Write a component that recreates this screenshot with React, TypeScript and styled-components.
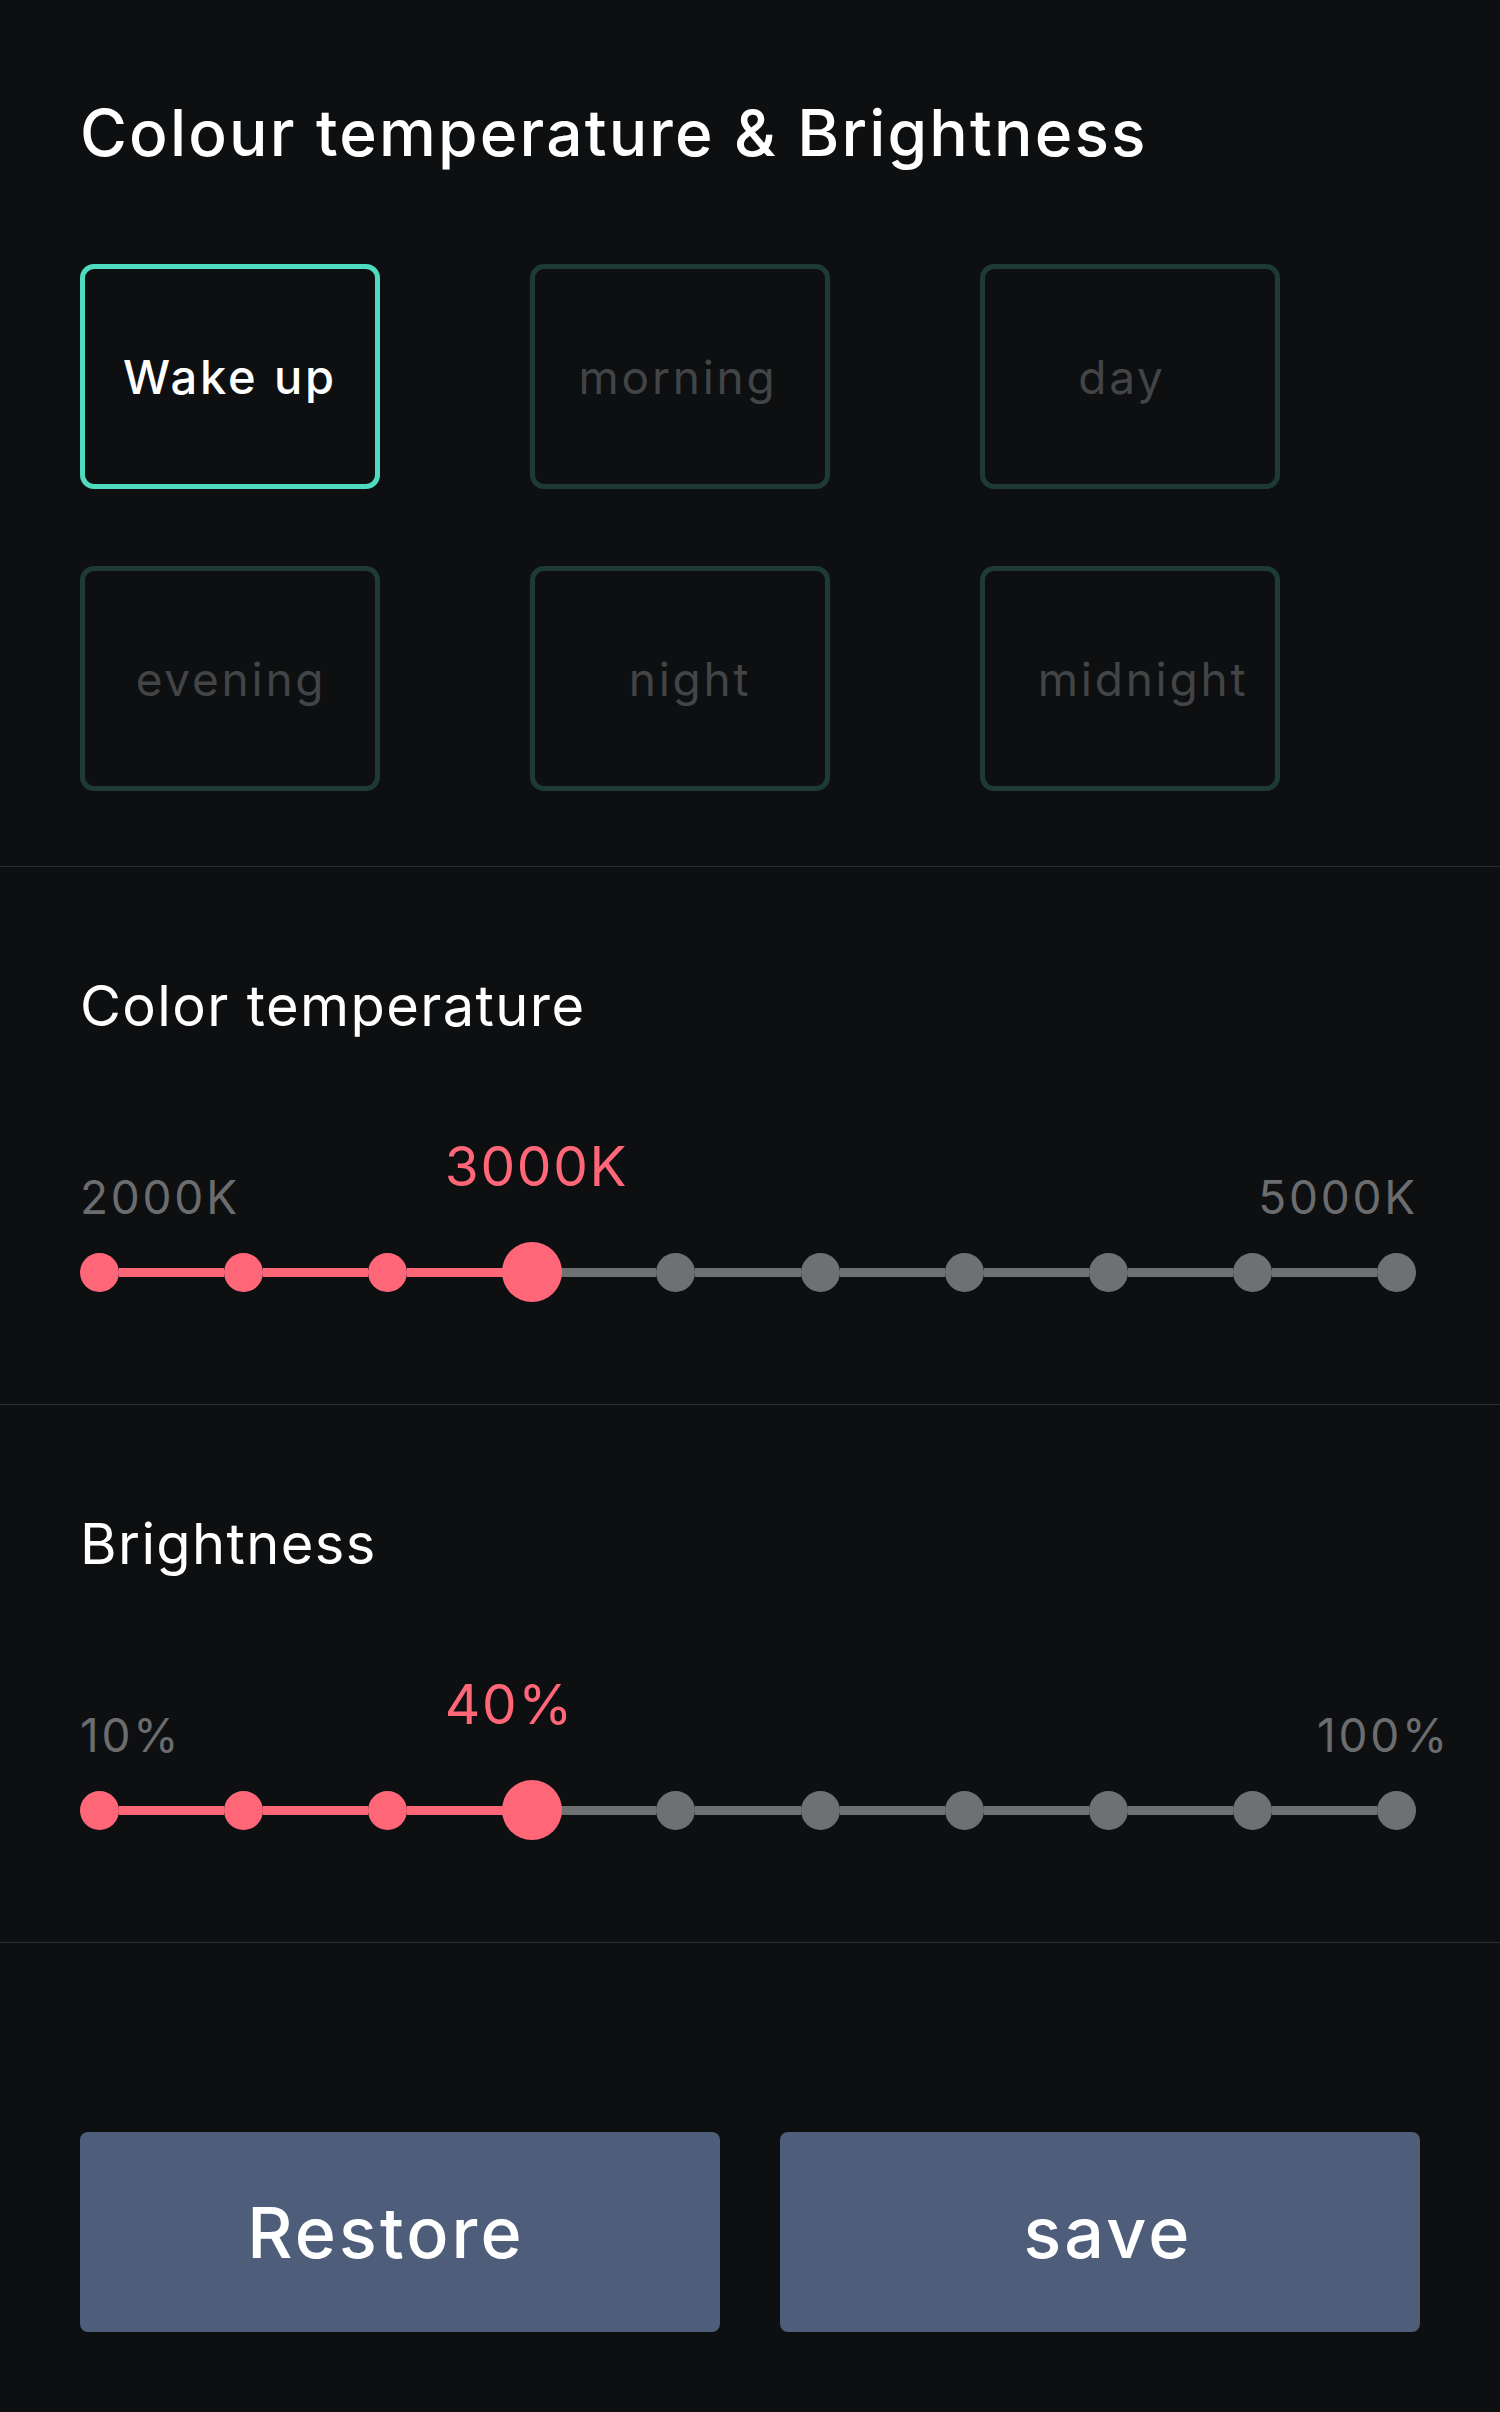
import React from "react";
import styled, { createGlobalStyle } from "styled-components";

const GlobalStyle = createGlobalStyle`
  html, body {
    margin: 0;
    padding: 0;
    background: #0e0f11;
  }
  body {
    font-family: Inter, "Noto Sans", "Liberation Sans", sans-serif;
    -webkit-font-smoothing: antialiased;
  }
`;

const PINK = "#ff6779";
const GREY = "#6f7072";

const Page = styled.main`
  width: 1500px;
  min-height: 2412px;
  background: #0e0f11;
  color: #ffffff;
  display: flex;
  flex-direction: column;
`;

const PresetSection = styled.section`
  padding: 101px 80px 75px;
  border-bottom: 1px solid #2c2d30;
`;

const Title = styled.h1`
  margin: 0;
  font-size: 64px;
  line-height: 1;
  font-weight: 500;
  letter-spacing: 0.034em;
  color: #ffffff;
`;

const PresetGrid = styled.div`
  margin-top: 99px;
  display: grid;
  grid-template-columns: repeat(3, 300px);
  grid-auto-rows: 225px;
  column-gap: 150px;
  row-gap: 77px;
`;

const PresetButton = styled.button<{ $active: boolean; $nudge: number }>`
  box-sizing: border-box;
  display: flex;
  align-items: center;
  justify-content: center;
  margin: 0;
  padding: 0 ${(p) => (p.$nudge < 0 ? -p.$nudge * 2 : 0)}px 0
    ${(p) => (p.$nudge > 0 ? p.$nudge * 2 : 0)}px;
  background: transparent;
  border: 5px solid ${(p) => (p.$active ? "#4fdbbf" : "#1e3a35")};
  border-radius: 14px;
  font-family: inherit;
  font-size: ${(p) => (p.$active ? 47 : 46)}px;
  font-weight: ${(p) => (p.$active ? 500 : 400)};
  letter-spacing: 0.06em;
  color: ${(p) => (p.$active ? "#ffffff" : "#424446")};
  cursor: pointer;
`;

const SliderSection = styled.section`
  padding: 111px 80px 102px;
  border-bottom: 1px solid #2c2d30;
`;

const Heading = styled.h2`
  margin: 0;
  font-size: 56px;
  line-height: 1;
  font-weight: 400;
  letter-spacing: 0.025em;
  color: #ffffff;
`;

const Scale = styled.div<{ $width: number }>`
  margin-top: 140px;
  width: ${(p) => p.$width}px;
  display: flex;
  justify-content: space-between;
  align-items: flex-end;
`;

const ScaleLabel = styled.span`
  font-size: 46px;
  line-height: 1;
  letter-spacing: 0.06em;
  color: #6b6c6e;
`;

const Track = styled.div`
  margin-top: 22px;
  width: 1336px;
  height: 60px;
  display: flex;
  align-items: center;
`;

const Dot = styled.span<{ $on: boolean; $big?: boolean }>`
  position: relative;
  z-index: 1;
  flex: none;
  width: ${(p) => (p.$big ? 60 : 39)}px;
  height: ${(p) => (p.$big ? 60 : 39)}px;
  margin: ${(p) => (p.$big ? "0 -10.5px" : "0")};
  border-radius: 50%;
  background: ${(p) => (p.$on ? PINK : GREY)};
`;

const Segment = styled.span<{ $on: boolean }>`
  flex: 1;
  height: 9px;
  background: ${(p) => (p.$on ? PINK : GREY)};
`;

const ValueLabel = styled.span`
  position: absolute;
  left: -57px;
  bottom: calc(100% + 48px);
  white-space: nowrap;
  font-size: 55px;
  line-height: 1;
  letter-spacing: 0.03em;
  color: ${PINK};
`;

const Actions = styled.div`
  padding: 189px 80px 80px;
  display: grid;
  grid-template-columns: 1fr 1fr;
  column-gap: 60px;
`;

const ActionButton = styled.button<{ $nudge: number }>`
  box-sizing: border-box;
  height: 200px;
  margin: 0;
  padding: 0 ${(p) => (p.$nudge < 0 ? -p.$nudge * 2 : 0)}px 0
    ${(p) => (p.$nudge > 0 ? p.$nudge * 2 : 0)}px;
  border: none;
  border-radius: 8px;
  background: #4e5d7a;
  color: #ffffff;
  font-family: inherit;
  font-size: 70px;
  font-weight: 500;
  letter-spacing: 0.045em;
  cursor: pointer;
`;

const presets = [
  { label: "Wake up", nudge: 0 },
  { label: "morning", nudge: -2 },
  { label: "day", nudge: -8 },
  { label: "evening", nudge: 1 },
  { label: "night", nudge: 10 },
  { label: "midnight", nudge: 13 },
];

type SliderProps = {
  title: string;
  min: string;
  max: string;
  value: string;
  index: number;
  scaleWidth: number;
};

function StepSlider({ title, min, max, value, index, scaleWidth }: SliderProps) {
  const steps = 10;
  const parts: React.ReactNode[] = [];
  for (let i = 0; i < steps; i++) {
    const big = i === index;
    parts.push(
      <Dot key={`d${i}`} $on={i <= index} $big={big}>
        {big && <ValueLabel>{value}</ValueLabel>}
      </Dot>
    );
    if (i < steps - 1) {
      parts.push(<Segment key={`s${i}`} $on={i < index} />);
    }
  }
  return (
    <SliderSection>
      <Heading>{title}</Heading>
      <Scale $width={scaleWidth}>
        <ScaleLabel>{min}</ScaleLabel>
        <ScaleLabel>{max}</ScaleLabel>
      </Scale>
      <Track>{parts}</Track>
    </SliderSection>
  );
}

export default function App() {
  return (
    <Page>
      <GlobalStyle />
      <PresetSection>
        <Title>Colour temperature &amp; Brightness</Title>
        <PresetGrid>
          {presets.map((p, i) => (
            <PresetButton key={p.label} $active={i === 0} $nudge={p.nudge}>
              {p.label}
            </PresetButton>
          ))}
        </PresetGrid>
      </PresetSection>
      <StepSlider
        title="Color temperature"
        min="2000K"
        max="5000K"
        value="3000K"
        index={3}
        scaleWidth={1338}
      />
      <StepSlider
        title="Brightness"
        min="10%"
        max="100%"
        value="40%"
        index={3}
        scaleWidth={1370}
      />
      <Actions>
        <ActionButton $nudge={-14}>Restore</ActionButton>
        <ActionButton $nudge={8}>save</ActionButton>
      </Actions>
    </Page>
  );
}
